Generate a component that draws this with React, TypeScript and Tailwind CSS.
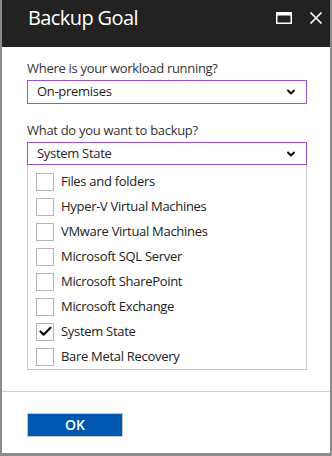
import { Check, ChevronDown } from 'lucide-react'

const options = [
  'Files and folders',
  'Hyper-V Virtual Machines',
  'VMware Virtual Machines',
  'Microsoft SQL Server',
  'Microsoft SharePoint',
  'Microsoft Exchange',
  'System State',
  'Bare Metal Recovery',
]

const checked = ['System State']

function SelectBox({ value, className }: { value: string; className?: string }) {
  return (
    <div
      className={
        'flex items-center justify-between border border-[#9b52c8] bg-white pl-[9px] pr-[9px] text-[13px] tracking-[-0.3px] text-[#1e1e1e] ' +
        (className ?? '')
      }
    >
      <span>{value}</span>
      <ChevronDown className="h-[12px] w-[12px] text-[#111]" strokeWidth={4} />
    </div>
  )
}

export default function App() {
  return (
    <div
      className="flex h-[456px] w-[332px] flex-col border-x-2 border-b-[3px] border-[#8c8c8c] bg-white"
      style={{ fontFamily: '"Open Sans", "Noto Sans", sans-serif' }}
    >
      <header className="flex h-[47px] shrink-0 items-center justify-between bg-[#222222] pb-[12px] pl-[26px] pr-[7px]">
        <h1 className="text-[20px] font-normal tracking-[-0.6px] text-white">Backup Goal</h1>
        <div className="flex items-center gap-[17px]">
          <svg width="16" height="12" viewBox="0 0 16 12" className="text-white">
            <rect x="0.75" y="0.75" width="14.5" height="10.5" fill="none" stroke="currentColor" strokeWidth="1.5" />
            <rect x="0" y="0" width="16" height="3.5" fill="currentColor" />
          </svg>
          <svg width="14" height="12" viewBox="0 0 14 12" className="text-white">
            <path d="M1.5 0.5 L12.5 11.5 M12.5 0.5 L1.5 11.5" stroke="currentColor" strokeWidth="1.6" />
          </svg>
        </div>
      </header>

      <div className="flex flex-col pl-[25px] pr-[23px] pt-[12px]">
        <label className="text-[13px] leading-[18px] tracking-[-0.3px] text-[#333]">
          Where is your workload running?
        </label>
        <SelectBox value="On-premises" className="mt-[3px] h-[24px]" />

        <label className="mt-[17px] text-[13px] leading-[18px] tracking-[-0.3px] text-[#333]">
          What do you want to backup?
        </label>
        <SelectBox value="System State" className="mt-[3px] h-[23px]" />

        <div className="flex flex-col border-x border-b border-[#c8c8c8] pt-[4px]">
          {options.map((o) => {
            const isChecked = checked.includes(o)
            return (
              <div
                key={o}
                className="flex h-[25px] items-center pl-[8px] text-[13px] tracking-[-0.3px] text-[#222]"
              >
                <span className="flex h-[18px] w-[18px] items-center justify-center border border-[#b4b4b4] bg-white">
                  {isChecked && <Check className="h-[15px] w-[15px] text-[#111]" strokeWidth={3.5} />}
                </span>
                <span className="ml-[7px]">{o}</span>
              </div>
            )
          })}
        </div>
      </div>

      <div className="mt-[21px] border-t border-[#cfcfcf] px-[25px] pt-[20px]">
        <button
          type="button"
          className="h-[24px] w-[96px] border border-[#c4c4c4] bg-[#0058b0] text-[14px] font-semibold text-white"
        >
          OK
        </button>
      </div>
    </div>
  )
}
